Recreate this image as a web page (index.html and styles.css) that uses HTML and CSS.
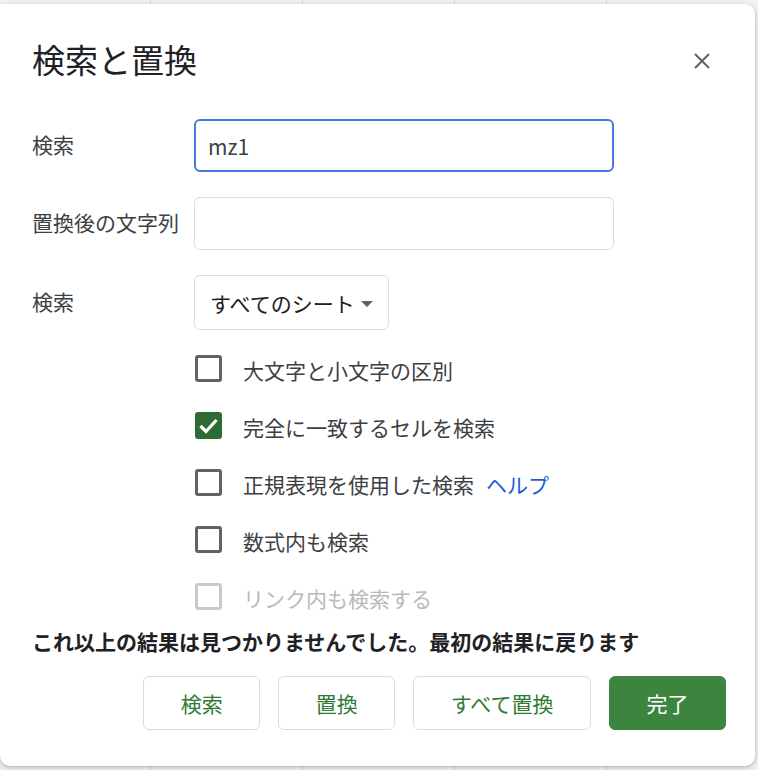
FILE: index.html
```html
<!DOCTYPE html>
<html lang="ja">
<head>
<meta charset="utf-8">
<title>検索と置換</title>
<link rel="stylesheet" href="styles.css">
</head>
<body>
<div class="dialog">
  <div class="header">
    <h1 class="title">検索と置換</h1>
    <button class="close" aria-label="閉じる">
      <svg width="16" height="16" viewBox="0 0 16 16"><path d="M1 1L15 15M15 1L1 15" stroke="#5f6368" stroke-width="2" fill="none"/></svg>
    </button>
  </div>
  <div class="form">
    <div class="label">検索</div>
    <input class="field focused" type="text" value="mz1">
    <div class="label">置換後の文字列</div>
    <input class="field" type="text" value="">
    <div class="label">検索</div>
    <div class="select"><span>すべてのシート</span><span class="arrow"></span></div>
  </div>
  <div class="options">
    <div class="opt"><span class="box"></span><span class="opt-text">大文字と小文字の区別</span></div>
    <div class="opt"><span class="box checked"><svg width="21" height="21" viewBox="0 0 21 21"><path d="M2.5 11L8 16.5L18.5 5" stroke="#fff" stroke-width="3.2" fill="none"/></svg></span><span class="opt-text">完全に一致するセルを検索</span></div>
    <div class="opt"><span class="box"></span><span class="opt-text">正規表現を使用した検索</span><a class="help" href="#">ヘルプ</a></div>
    <div class="opt"><span class="box"></span><span class="opt-text">数式内も検索</span></div>
    <div class="opt disabled"><span class="box"></span><span class="opt-text">リンク内も検索する</span></div>
  </div>
  <div class="message">これ以上の結果は見つかりませんでした。最初の結果に戻ります</div>
  <div class="actions">
    <button class="btn">検索</button>
    <button class="btn">置換</button>
    <button class="btn">すべて置換</button>
    <button class="btn primary">完了</button>
  </div>
</div>
</body>
</html>
```

FILE: styles.css
```css
html, body {
  margin: 0;
  padding: 0;
}
body {
  padding-top: 4px;
  height: 770px;
  box-sizing: border-box;
  background-color: #f3f3f3;
  background-image: linear-gradient(to right, #d4d4d4 1px, transparent 1px);
  background-size: 152px 100%;
  background-position: 150px 0;
  font-family: "Noto Sans CJK JP", "Noto Sans", sans-serif;
  overflow: hidden;
}
.dialog {
  width: 755px;
  box-sizing: border-box;
  background: #fff;
  border-radius: 0 10px 10px 10px;
  box-shadow: 0 1px 3px rgba(60,64,67,0.25), 0 3px 8px 2px rgba(60,64,67,0.12);
  padding: 33px 29px 36px 32px;
}
.header {
  display: flex;
  justify-content: space-between;
  align-items: center;
  height: 48px;
}
.title {
  margin: -4px 0 0 0;
  font-size: 33px;
  font-weight: 400;
  line-height: 48px;
  color: #202124;
}
.close {
  width: 48px;
  height: 48px;
  border: none;
  background: none;
  padding: 0;
  display: flex;
  align-items: center;
  justify-content: center;
}
.form {
  margin-top: 34px;
  display: grid;
  grid-template-columns: 162px 420px;
  row-gap: 25px;
  align-items: center;
}
.label {
  font-size: 21px;
  line-height: 30px;
  color: #3c4043;
  margin-top: -3px;
}
.field {
  height: 53px;
  width: 420px;
  box-sizing: border-box;
  border: 1px solid #dadce0;
  border-radius: 6px;
  padding: 0 13px;
  font-family: "Noto Sans CJK JP", "Noto Sans", sans-serif;
  font-size: 21px;
  color: #3c4043;
  outline: none;
  margin: 0;
}
.field.focused {
  border: 2px solid #4479e1;
  padding: 0 12px;
}
.select {
  height: 55px;
  width: 195px;
  box-sizing: border-box;
  border: 1px solid #dadce0;
  border-radius: 6px;
  display: flex;
  align-items: center;
  padding: 0 13px 0 15px;
  gap: 6px;
  font-size: 21px;
  color: #202124;
  white-space: nowrap;
}
.arrow {
  width: 0;
  height: 0;
  border-left: 6px solid transparent;
  border-right: 6px solid transparent;
  border-top: 6px solid #5f6368;
  margin-top: 2px;
}
.options {
  margin-top: 11px;
  padding-left: 163px;
}
.opt {
  height: 57px;
  display: flex;
  align-items: center;
  font-size: 21px;
  color: #3c4043;
}
.box {
  width: 27px;
  height: 27px;
  box-sizing: border-box;
  border: 3px solid #5f6368;
  border-radius: 3px;
  margin-right: 21px;
  display: flex;
  align-items: center;
  justify-content: center;
  flex: none;
  margin-top: -2px;
}
.box.checked {
  background: #2f6b34;
  border-color: #2f6b34;
}
.opt-text {
  line-height: 30px;
}
.help {
  margin-left: 12px;
  color: #1a5fd6;
  text-decoration: none;
}
.opt.disabled {
  color: #b9b9b9;
}
.opt.disabled .box {
  border-color: #c9c9c9;
}
.message {
  font-size: 21px;
  font-weight: 700;
  line-height: 30px;
  color: #202124;
}
.actions {
  margin-top: 20px;
  display: flex;
  justify-content: flex-end;
  gap: 18px;
}
.btn {
  height: 54px;
  padding: 0 36.5px;
  border: 1px solid #dadce0;
  border-radius: 6px;
  background: #fff;
  color: #2f7a35;
  font-family: "Noto Sans CJK JP", "Noto Sans", sans-serif;
  font-size: 21px;
  line-height: 30px;
  white-space: nowrap;
}
.btn.primary {
  background: #3d8440;
  border-color: #3d8440;
  color: #fff;
}
```
